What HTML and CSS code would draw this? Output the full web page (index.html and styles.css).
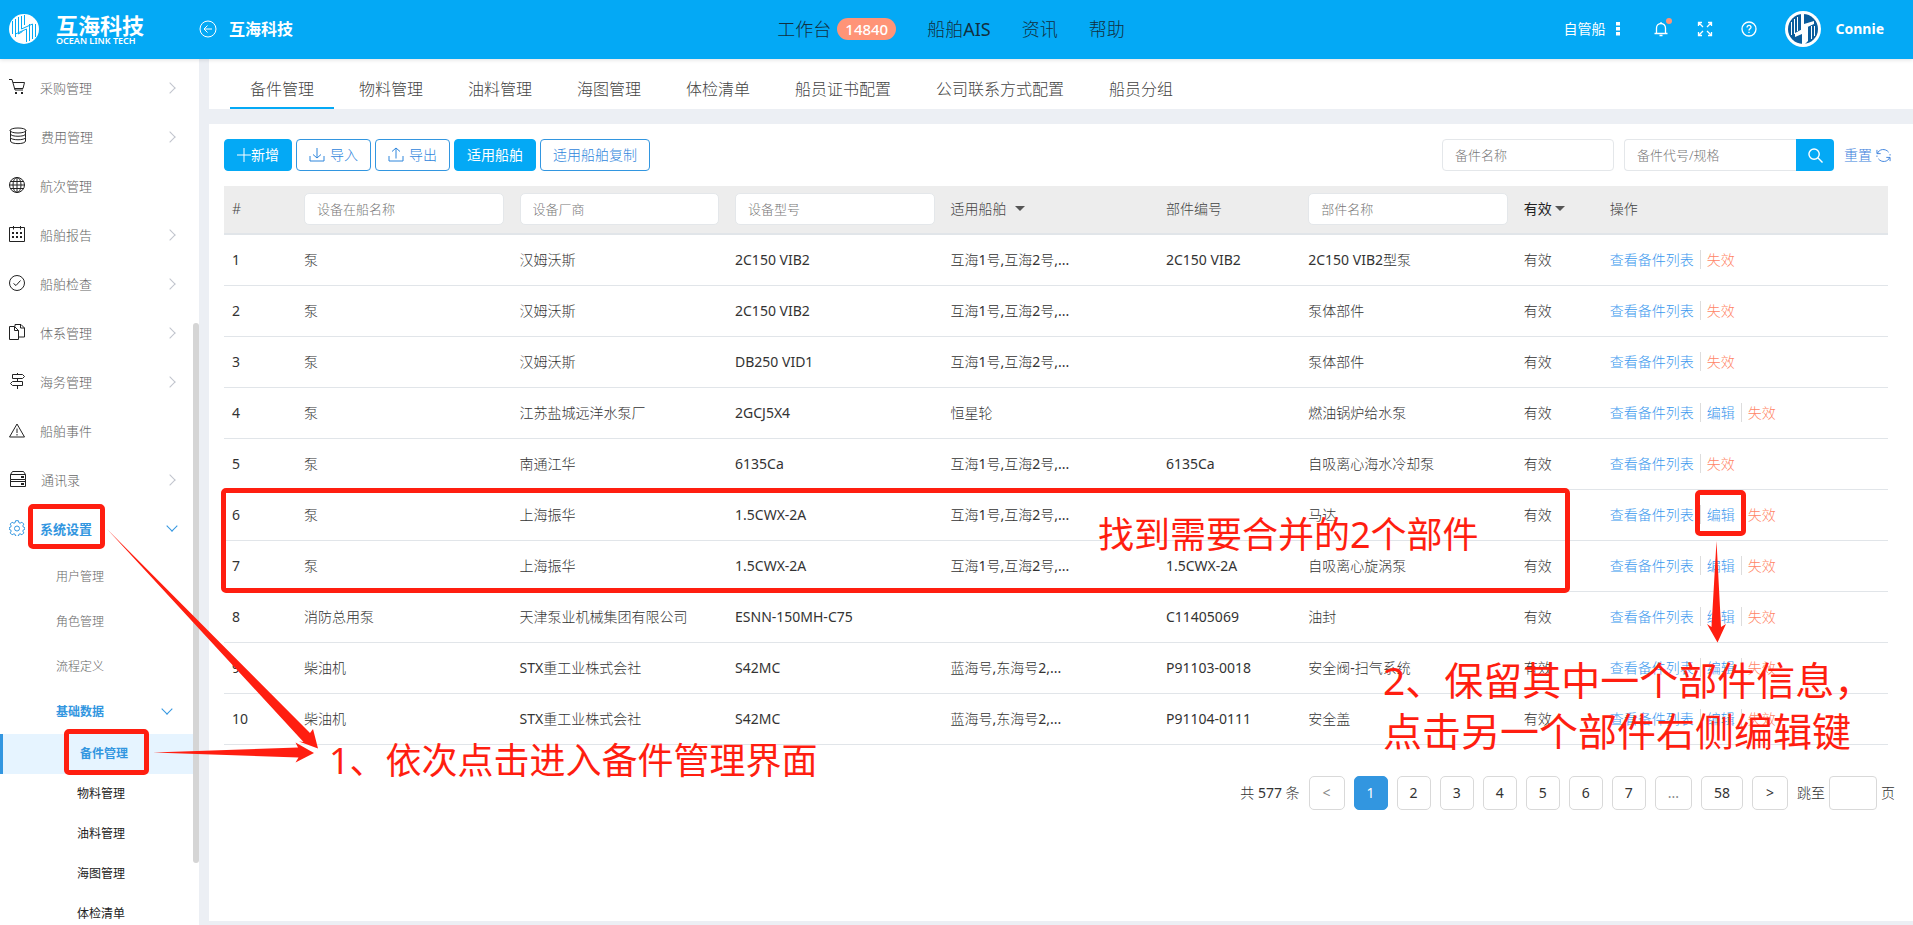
FILE: index.html
```html
<!DOCTYPE html>
<html lang="zh-CN">
<head>
<meta charset="utf-8">
<title>互海科技</title>
<link rel="stylesheet" href="styles.css">
</head>
<body>
<header class="topbar">
  <div class="topbar-left">
    <svg class="logo" viewBox="0 0 30 30" aria-hidden="true">
      <circle cx="15" cy="15" r="15" fill="#fff"/>
      <path class="logo-line" d="M3.500 7v13M6.500 5v18M9.500 3v17l4-2.500M12.500 2v13l11-5M26.500 23v-13M23.500 25v-15M20.500 27v-17M17.500 28v-13l-11 5M15.500 1v10"/>
    </svg>
    <div class="brand"><span class="brand-cn">互海科技</span><span class="brand-en">OCEAN LINK TECH</span></div>
    <svg class="back" viewBox="0 0 18 18" aria-hidden="true"><circle cx="9" cy="9" r="8"/><path d="M13 9H5.500M8.500 5.500L5 9l3.500 3.500"/></svg>
    <h1 class="company">互海科技</h1>
  </div>
  <nav class="topnav">
    <a href="#">工作台<span class="count">14840</span></a>
    <a href="#">船舶AIS</a>
    <a href="#">资讯</a>
    <a href="#">帮助</a>
  </nav>
  <div class="topbar-right">
    <button class="fleet" type="button">自管船<svg viewBox="0 0 4 14" class="dots"><path d="M0 0h4v3.500H0zM0 5h4v3.500H0zM0 10h4v3.500H0z"/></svg></button>
    <button class="tool bell" type="button" aria-label="通知"><svg viewBox="0 0 16 16"><path d="M8 1v1M3.500 12.500V7a4.500 4.500 0 0 1 9 0v5.500M1.500 12.500h13M6.500 14.500h3"/></svg><span class="dot"></span></button>
    <button class="tool" type="button" aria-label="全屏"><svg viewBox="0 0 16 16"><path d="M1.500 5V1.500H5M1.500 1.500L6 6M11 1.500h3.500V5M14.500 1.500L10 6M1.500 11v3.500H5M1.500 14.500L6 10M14.500 11v3.500H11M14.500 14.500L10 10"/></svg></button>
    <button class="tool" type="button" aria-label="帮助"><svg viewBox="0 0 16 16"><circle cx="8" cy="8" r="7"/><path d="M6 6.500C6 3.500 10 3.800 10 6.200 10 7.800 8 7.800 8 9.500M8 10.800v1.200"/></svg></button>
    <svg class="avatar" viewBox="0 0 36 36" aria-hidden="true">
      <circle cx="18" cy="18" r="18" fill="#fff"/><circle cx="18" cy="18" r="15" fill="#0b5c9c"/>
      <path fill="#fff" d="M16 3h3v10l10-3v3l-13 6zM20 33h-3v-10l-7 3v-4l13-7v15z"/>
      <path d="M6.500 11v13M9.500 8v15M12.500 6v14M29.500 25v-10M26.500 28v-13" stroke="#fff" fill="none"/>
    </svg>
    <span class="user">Connie</span>
  </div>
</header>

<div class="shell">
  <aside class="sidebar">
    <nav class="menu">
      <a class="item" href="#"><svg viewBox="0 0 16 16"><path d="M0 .5h3l3 10.500h8M4 3.500h11.500L14 9.500H5.800"/><path d="M6 13h2v2H6zM12 13h2v2h-2z" class="solid"/></svg><span>采购管理</span><i class="chev"></i></a>
      <a class="item" href="#"><svg class="big" viewBox="0 0 18 18"><ellipse cx="9" cy="3.500" rx="8" ry="2.500"/><path d="M1.500 3.500v3.500c0 3 15 3 15 0v-3.500M1.500 7v3.500c0 3 15 3 15 0V7M1.500 10.500v3.500c0 3.500 15 3.500 15 0v-3.500"/></svg><span>费用管理</span><i class="chev"></i></a>
      <a class="item" href="#"><svg viewBox="0 0 16 16"><circle cx="8" cy="8" r="7.500"/><ellipse cx="8" cy="8" rx="4" ry="7.500"/><path d="M8 .5v15M.5 8h15M2 4.500h12M2 11.500h12"/></svg><span>航次管理</span></a>
      <a class="item" href="#"><svg viewBox="0 0 16 16"><path d="M.5 1.500h15v14H.5zM4.500 0v3.500M11.500 0v3.500"/><path class="solid" d="M3 6h2v2H3zM7 6h2v2H7zM11 6h2v2h-2zM3 10h2v2H3zM7 10h2v2H7zM11 10h2v2h-2z"/></svg><span>船舶报告</span><i class="chev"></i></a>
      <a class="item" href="#"><svg viewBox="0 0 16 16"><circle cx="8" cy="8" r="7.500"/><path d="M4.500 8.500L7 10.500l4.500-5"/></svg><span>船舶检查</span><i class="chev"></i></a>
      <a class="item" href="#"><svg viewBox="0 0 16 16"><path d="M5.500 2.500H.5v13h9v-9zM5.500 2.500v4h4M6 2.500V.5h6l3.500 3.500v9H9.500M11.500.5V4h4"/></svg><span>体系管理</span><i class="chev"></i></a>
      <a class="item" href="#"><svg viewBox="0 0 16 16"><path d="M8.500 0v1.500M8.500 5.500v3M8.500 12.500V16M3.500 1.500h10l2 2-2 2h-10zM13.500 8.500h-10l-2 2 2 2h10z"/></svg><span>海务管理</span><i class="chev"></i></a>
      <a class="item" href="#"><svg viewBox="0 0 16 16"><path d="M8 2l7.500 13H.5zM8 6.500v4.500M8 12v1.500"/></svg><span>船舶事件</span></a>
      <a class="item" href="#"><svg class="big" viewBox="0 0 18 18"><path d="M1.500 4.500l2-3h11l2 3v5h-15zM1.500 4.500h15M1.500 9.500v7h15v-7M1.500 11.500h15"/><path class="solid" d="M12 6h3v2h-3zM12 13h3v2h-3z"/></svg><span>通讯录</span><i class="chev"></i></a>
      <a class="item open" href="#"><svg viewBox="0 0 16 16"><path d="M6.600.7h2.800l.5 2 1.200.5 1.800-1 1.900 1.900-1 1.800.5 1.200 1.500.5v1.800l-1.500.5-.5 1.200 1 1.800-1.900 1.900-1.800-1-1.200.5-.5 2H6.600l-.5-2-1.200-.5-1.800 1-1.900-1.900 1-1.800-.5-1.200-1.500-.5V7.600l1.500-.5.500-1.200-1-1.800 1.900-1.900 1.800 1 1.200-.5z"/><circle cx="8" cy="8.500" r="2.500"/></svg><span>系统设置</span><i class="chev down"></i></a>
      <a class="sub" href="#">用户管理</a>
      <a class="sub" href="#">角色管理</a>
      <a class="sub" href="#">流程定义</a>
      <a class="sub open" href="#">基础数据<i class="chev down"></i></a>
      <a class="leaf current" href="#">备件管理</a>
      <a class="leaf" href="#">物料管理</a>
      <a class="leaf" href="#">油料管理</a>
      <a class="leaf" href="#">海图管理</a>
      <a class="leaf" href="#">体检清单</a>
    </nav>
    <span class="thumb"></span>
  </aside>

  <main class="content">
    <nav class="tabs">
      <a class="active" href="#">备件管理</a>
      <a href="#">物料管理</a>
      <a href="#">油料管理</a>
      <a href="#">海图管理</a>
      <a href="#">体检清单</a>
      <a href="#">船员证书配置</a>
      <a href="#">公司联系方式配置</a>
      <a href="#">船员分组</a>
    </nav>

    <section class="panel">
      <div class="toolbar">
        <button class="btn primary" type="button"><svg viewBox="0 0 14 14"><path d="M7 0v14M0 7h14"/></svg>新增</button>
        <button class="btn icon" type="button"><svg viewBox="0 0 16 16"><path d="M8 1v10M4 7.500L8 11l4-3.500M1 9v5h14V9"/></svg>导入</button>
        <button class="btn icon" type="button"><svg viewBox="0 0 16 16"><path d="M8 11.500V1M4 4.500L8 1l4 3.500M1 9v5h14V9"/></svg>导出</button>
        <button class="btn primary" type="button">适用船舶</button>
        <button class="btn" type="button">适用船舶复制</button>
        <form class="search">
          <input class="field" type="text" placeholder="备件名称" aria-label="备件名称">
          <div class="search-group">
            <input class="field" type="text" placeholder="备件代号/规格" aria-label="备件代号/规格">
            <button class="go" type="button" aria-label="搜索"><svg viewBox="0 0 16 16"><circle cx="6.500" cy="6.500" r="5.500"/><path d="M10.500 10.500l5 5"/></svg></button>
          </div>
          <button class="reset" type="button">重置<svg viewBox="0 0 16 16"><path d="M1 2v4h4M1.500 6C3 1 10 0 13.500 4.500M15 14v-4h-4M14.500 10C13 15 6 16 2.500 11.500M15 6.500v1.500M1 8v1.500"/></svg></button>
        </form>
      </div>

      <table class="grid">
        <colgroup><col class="c-no"><col class="c-wide"><col class="c-wide"><col class="c-wide"><col class="c-wide"><col class="c-code"><col class="c-wide"><col class="c-state"><col></colgroup>
        <thead>
          <tr>
            <th>#</th>
            <th><input class="field" type="text" placeholder="设备在船名称" aria-label="设备在船名称"></th>
            <th><input class="field" type="text" placeholder="设备厂商" aria-label="设备厂商"></th>
            <th><input class="field" type="text" placeholder="设备型号" aria-label="设备型号"></th>
            <th><button class="filter spaced" type="button">适用船舶<i></i></button></th>
            <th>部件编号</th>
            <th><input class="field" type="text" placeholder="部件名称" aria-label="部件名称"></th>
            <th><button class="filter dark" type="button">有效<i></i></button></th>
            <th>操作</th>
          </tr>
        </thead>
        <tbody>
          <tr><td>1</td><td>泵</td><td>汉姆沃斯</td><td>2C150 VIB2</td><td>互海1号,互海2号,...</td><td>2C150 VIB2</td><td>2C150 VIB2型泵</td><td>有效</td><td class="ops"><a href="#">查看备件列表</a><a class="off" href="#">失效</a></td></tr>
          <tr><td>2</td><td>泵</td><td>汉姆沃斯</td><td>2C150 VIB2</td><td>互海1号,互海2号,...</td><td></td><td>泵体部件</td><td>有效</td><td class="ops"><a href="#">查看备件列表</a><a class="off" href="#">失效</a></td></tr>
          <tr><td>3</td><td>泵</td><td>汉姆沃斯</td><td>DB250 VID1</td><td>互海1号,互海2号,...</td><td></td><td>泵体部件</td><td>有效</td><td class="ops"><a href="#">查看备件列表</a><a class="off" href="#">失效</a></td></tr>
          <tr><td>4</td><td>泵</td><td>江苏盐城远洋水泵厂</td><td>2GCJ5X4</td><td>恒星轮</td><td></td><td>燃油锅炉给水泵</td><td>有效</td><td class="ops"><a href="#">查看备件列表</a><a href="#">编辑</a><a class="off" href="#">失效</a></td></tr>
          <tr><td>5</td><td>泵</td><td>南通江华</td><td>6135Ca</td><td>互海1号,互海2号,...</td><td>6135Ca</td><td>自吸离心海水冷却泵</td><td>有效</td><td class="ops"><a href="#">查看备件列表</a><a class="off" href="#">失效</a></td></tr>
          <tr><td>6</td><td>泵</td><td>上海振华</td><td>1.5CWX-2A</td><td>互海1号,互海2号,...</td><td></td><td>马达</td><td>有效</td><td class="ops"><a href="#">查看备件列表</a><a href="#">编辑</a><a class="off" href="#">失效</a></td></tr>
          <tr><td>7</td><td>泵</td><td>上海振华</td><td>1.5CWX-2A</td><td>互海1号,互海2号,...</td><td>1.5CWX-2A</td><td>自吸离心旋涡泵</td><td>有效</td><td class="ops"><a href="#">查看备件列表</a><a href="#">编辑</a><a class="off" href="#">失效</a></td></tr>
          <tr><td>8</td><td>消防总用泵</td><td>天津泵业机械集团有限公司</td><td>ESNN-150MH-C75</td><td></td><td>C11405069</td><td>油封</td><td>有效</td><td class="ops"><a href="#">查看备件列表</a><a href="#">编辑</a><a class="off" href="#">失效</a></td></tr>
          <tr><td>9</td><td>柴油机</td><td>STX重工业株式会社</td><td>S42MC</td><td>蓝海号,东海号2,...</td><td>P91103-0018</td><td>安全阀-扫气系统</td><td>有效</td><td class="ops"><a href="#">查看备件列表</a><a href="#">编辑</a><a class="off" href="#">失效</a></td></tr>
          <tr><td>10</td><td>柴油机</td><td>STX重工业株式会社</td><td>S42MC</td><td>蓝海号,东海号2,...</td><td>P91104-0111</td><td>安全盖</td><td>有效</td><td class="ops"><a href="#">查看备件列表</a><a href="#">编辑</a><a class="off" href="#">失效</a></td></tr>
        </tbody>
      </table>

      <div class="pager">
        <span class="total">共 <b>577</b> 条</span>
        <button class="step muted" type="button">&lt;</button>
        <button class="on" type="button">1</button>
        <button type="button">2</button>
        <button type="button">3</button>
        <button type="button">4</button>
        <button type="button">5</button>
        <button type="button">6</button>
        <button type="button">7</button>
        <button class="muted" type="button">...</button>
        <button type="button">58</button>
        <button class="step" type="button">&gt;</button>
        <label class="jump">跳至<input type="text" aria-label="页码">页</label>
      </div>
    </section>
  </main>
</div>

<div class="notes">
  <div class="mark mark-settings"></div>
  <div class="mark mark-parts"></div>
  <div class="mark mark-rows"></div>
  <div class="mark mark-edit"></div>
  <svg class="arrows" aria-hidden="true">
    <path d="M107 529L310 733l3-4 5 19.500-19-7 4.500.5z"/>
    <path d="M153 752.500L298 747.500l-2.500-5 18.500 10.500-18.500 9.500 3-5z"/>
    <path d="M1716.500 541L1721 627l5-3-8.500 18.500-10.500-18.500 4.500 3z"/>
  </svg>
  <p class="note note-path">1、依次点击进入备件管理界面</p>
  <p class="note note-find">找到需要合并的2个部件</p>
  <p class="note note-keep">2、保留其中一个部件信息，<br>点击另一个部件右侧编辑键</p>
</div>
</body>
</html>
```
FILE: styles.css
```css
* { box-sizing: border-box; }
body {
  margin: 0;
  height: 100vh;
  overflow: hidden;
  display: flex;
  flex-direction: column;
  position: relative;
  background: #eceff4;
  color: #666;
  font: 300 14px/20px "Noto Sans", "Noto Sans CJK SC", sans-serif;
}
a { color: inherit; text-decoration: none; }
button, input { font: inherit; color: inherit; margin: 0; }
button { border: 0; padding: 0; background: none; cursor: pointer; }
svg { fill: none; stroke: currentColor; flex: none; }

/* top bar */
.topbar {
  display: grid;
  grid-template-columns: 1fr auto 1fr;
  align-items: center;
  height: 59px;
  flex: none;
  padding: 0 20px 2px 9px;
  background: #04a9f5;
  color: #fff;
  box-shadow: 0 1px 4px rgba(0, 0, 0, .12);
  z-index: 1;
}
.topbar-left, .topbar-right, .topnav { display: flex; align-items: center; }
.logo { width: 30px; height: 30px; stroke: none; }
.logo-line { stroke: #04a9f5; }
.brand { display: flex; flex-direction: column; margin-left: 17px; width: 143px; }
.brand-cn { font-size: 22px; line-height: 24px; font-weight: 700; }
.brand-en { font-size: 9px; line-height: 8px; font-weight: 600; }
.back { width: 18px; height: 18px; }
.company { margin: 0 0 0 12px; font-size: 16px; line-height: 20px; font-weight: 700; }
.topnav {
  gap: 31px;
  color: #12303f;
  font-size: 18px;
  font-weight: 400;
  font-family: "Noto Sans", "Noto Sans CJK SC Light", "Noto Sans CJK SC", sans-serif;
}
.topnav a { display: flex; align-items: center; }
.count {
  margin-left: 6px;
  padding: 0 8px;
  border-radius: 11px;
  background: #ff9477;
  color: #fff;
  font-size: 15px;
  line-height: 22px;
  font-weight: 500;
}
.topbar-right { justify-content: flex-end; padding-right: 9px; }
.fleet { display: flex; align-items: center; gap: 10px; font-weight: 400; }
.dots { width: 4px; height: 14px; fill: #fff; stroke: none; }
.tool { position: relative; display: flex; margin-left: 28px; }
.tool svg { width: 16px; height: 16px; stroke-width: 1.300; }
.bell { margin-left: 33px; }
.dot { position: absolute; right: -3px; top: -3px; width: 6px; height: 6px; border-radius: 50%; background: #ff9477; }
.avatar { width: 36px; height: 36px; margin-left: 28px; stroke: none; }
.user { margin-left: 15px; font-weight: 700; }

/* layout */
.shell { display: flex; flex: 1; min-height: 0; }
.sidebar { position: relative; width: 199px; flex: none; overflow: hidden; background: #fff; }
.thumb { position: absolute; right: 0; top: 264px; width: 6px; height: 540px; border-radius: 3px; background: #d5d5d5; }
.menu { padding-top: 5px; font-size: 13px; }
.item { display: flex; align-items: center; height: 49px; padding: 0 25px 2px 9px; }
.item svg { width: 16px; height: 16px; margin: 0 15px 2px 0; color: #222; }
.item .big { width: 18px; height: 18px; margin-right: 14px; }
.item .solid { fill: currentColor; stroke: none; }
.item .chev, .sub .chev { margin-left: auto; }
.item.open, .sub.open { color: #3296e0; font-weight: 700; }
.item.open { padding-right: 23px; }
.item.open svg { color: #3296e0; }
.chev { width: 8px; height: 8px; border: solid #c0c4cc; border-width: 1px 1px 0 0; transform: rotate(45deg); }
.chev.down { border-color: #3296e0; transform: rotate(135deg); margin-bottom: 5px; }
.sub { display: flex; align-items: center; height: 45px; padding: 0 28px 0 56px; font-size: 12px; }
.leaf { display: flex; align-items: center; height: 40px; padding-left: 77px; color: #222; font-size: 12px; font-weight: 400; }
.leaf.current { border-left: 3px solid #3296e0; background: #e6f4ff; color: #3296e0; font-weight: 700; }

.content {
  display: flex;
  flex-direction: column;
  flex: 1;
  min-width: 0;
  gap: 15px;
  padding: 0 0 4px 10px;
}
.tabs { display: flex; flex: none; gap: 5px; height: 50px; padding-left: 21px; background: #fff; font-size: 16px; color: #444; }
.tabs a { display: flex; align-items: center; padding: 12px 20px 0; border-bottom: 2px solid transparent; }
.tabs .active { border-color: #04a9f5; }
.panel { flex: 1; padding: 15px 25px 0 15px; background: #fff; }

/* toolbar */
.toolbar { display: flex; align-items: center; gap: 4px; margin-right: -3px; }
.btn {
  display: flex;
  align-items: center;
  height: 32px;
  padding: 0 12px;
  border: 1px solid #3296e0;
  border-radius: 4px;
  color: #2f86dc;
  background: #fff;
}
.btn.primary { border-color: #04a9f5; background: #04a9f5; color: #fff; font-weight: 400; }
.btn svg { width: 14px; height: 14px; }
.btn.icon svg { width: 16px; height: 16px; margin-right: 5px; }
.search { display: flex; gap: 10px; margin-left: auto; }
.field {
  width: 172px;
  height: 32px;
  padding: 0 12px;
  border: 1px solid #e4e7ea;
  border-radius: 4px;
  background: #fff;
  font-size: 13px;
}
.field::placeholder { color: #777; opacity: 1; }
.search-group { display: flex; }
.search-group .field { border-radius: 4px 0 0 4px; border-right: 0; }
.go { display: flex; align-items: center; justify-content: center; width: 38px; border-radius: 0 4px 4px 0; background: #04a9f5; color: #fff; }
.go svg { width: 15px; height: 15px; stroke-width: 1.500; }
.reset { display: flex; align-items: center; gap: 4px; color: #3a80dc; }
.reset svg { width: 15px; height: 15px; }

/* table */
.grid {
  width: 100%;
  margin-top: 15px;
  table-layout: fixed;
  border-collapse: separate;
  border-spacing: 0;
  font-family: "Noto Sans", "Noto Sans CJK SC Light", "Noto Sans CJK SC", sans-serif;
}
.c-no { width: 4.330%; }
.c-wide { width: 12.950%; }
.c-code { width: 8.550%; }
.c-state { width: 5.170%; }
.grid th { height: 49px; padding: 0 8px 2px; background: #ededed; border-bottom: 2px solid #e1e5e9; text-align: left; font-weight: 300; color: #444; }
.grid th .field { display: block; width: 100%; font-size: 13px; border-radius: 5px; }
.grid td { height: 51px; padding: 0 8px; border-bottom: 1px solid #e1e5e9; white-space: nowrap; color: #333; font-weight: 400; }
.filter { display: flex; align-items: center; gap: 3px; font-weight: 300; }
.filter.spaced { gap: 8px; }
.filter.dark { color: #222; font-weight: 400; font-family: "Noto Sans", "Noto Sans CJK SC", sans-serif; }
.filter i { border: 5px solid transparent; border-top-color: #555; border-bottom: 0; }
.ops a { color: #3b98ee; }
.ops a + a { margin-left: 6px; padding-left: 6px; border-left: 1px solid #ddd; }
.ops .off { color: #ff8566; }

/* pagination */
.pager { display: flex; align-items: center; justify-content: flex-end; gap: 9px; margin: 31px -7px 0 0; color: #333; }
.pager b { font-weight: 400; }
.pager button { min-width: 34px; height: 34px; padding: 0 12px; border: 1px solid #d9d9d9; border-radius: 5px; background: #fff; font-weight: 400; }
.pager .step { width: 36px; }
.pager .on { min-width: 33px; border-color: #3296e0; background: #3296e0; color: #fff; }
.pager .muted { color: #888; }
.jump { display: flex; align-items: center; gap: 4px; }
.jump input { width: 48px; height: 34px; border: 1px solid #d9d9d9; border-radius: 4px; }

/* annotations drawn over the page */
.notes { position: absolute; inset: 0; z-index: 2; pointer-events: none; color: #ff1e10; overflow: hidden; }
.arrows { position: absolute; inset: 0; width: 100%; height: 100%; fill: #ff1e10; stroke: none; }
.mark { position: absolute; border: 5px solid #ff1e10; border-radius: 5px; }
.mark-settings { left: 28px; top: 504px; width: 77px; height: 45px; }
.mark-parts { left: 64px; top: 729px; width: 85px; height: 46px; }
.mark-rows { left: 221px; top: 488px; width: 1349px; height: 105px; }
.mark-edit { left: 1695px; top: 490px; width: 51px; height: 46px; }
.note { position: absolute; margin: 0; white-space: nowrap; font-size: 36px; line-height: 52px; font-weight: 400; }
.note-path { left: 329px; top: 735px; }
.note-find { left: 1098px; top: 509px; }
.note-keep { left: 1383px; top: 654px; font-size: 39px; line-height: 51px; }
```
